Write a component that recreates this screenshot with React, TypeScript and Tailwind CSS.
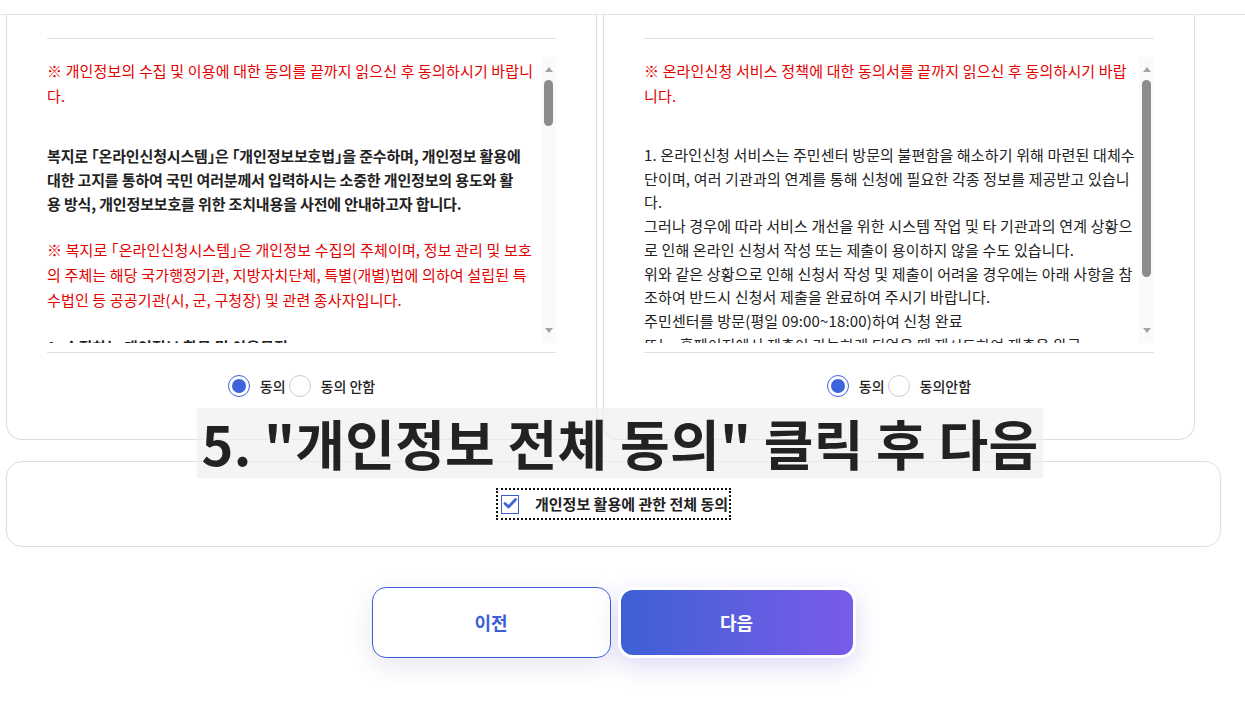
import React from "react";

const leftRed1 = [
  "※ 개인정보의 수집 및 이용에 대한 동의를 끝까지 읽으신 후 동의하시기 바랍니",
  "다.",
];
const leftBold = [
  "복지로 「온라인신청시스템」은 「개인정보보호법」을 준수하며, 개인정보 활용에",
  "대한 고지를 통하여 국민 여러분께서 입력하시는 소중한 개인정보의 용도와 활",
  "용 방식, 개인정보보호를 위한 조치내용을 사전에 안내하고자 합니다.",
];
const leftRed2 = [
  "※ 복지로 「온라인신청시스템」은 개인정보 수집의 주체이며, 정보 관리 및 보호",
  "의 주체는 해당 국가행정기관, 지방자치단체, 특별(개별)법에 의하여 설립된 특",
  "수법인 등 공공기관(시, 군, 구청장) 및 관련 종사자입니다.",
];
const rightRed = [
  "※ 온라인신청 서비스 정책에 대한 동의서를 끝까지 읽으신 후 동의하시기 바랍",
  "니다.",
];
const rightBody = [
  "1. 온라인신청 서비스는 주민센터 방문의 불편함을 해소하기 위해 마련된 대체수",
  "단이며, 여러 기관과의 연계를 통해 신청에 필요한 각종 정보를 제공받고 있습니",
  "다.",
  "그러나 경우에 따라 서비스 개선을 위한 시스템 작업 및 타 기관과의 연계 상황으",
  "로 인해 온라인 신청서 작성 또는 제출이 용이하지 않을 수도 있습니다.",
  "위와 같은 상황으로 인해 신청서 작성 및 제출이 어려울 경우에는 아래 사항을 참",
  "조하여 반드시 신청서 제출을 완료하여 주시기 바랍니다.",
  "주민센터를 방문(평일 09:00~18:00)하여 신청 완료",
  "또는, 홈페이지에서 제출이 가능하게 되었을 때 재시도하여 제출을 완료",
];

function Lines({ lines, className }: { lines: string[]; className: string }) {
  return (
    <div className={className}>
      {lines.map((l, i) => (
        <div key={i} className="whitespace-nowrap">
          {l}
        </div>
      ))}
    </div>
  );
}

function Scrollbar({ thumb }: { thumb: string }) {
  return (
    <div className="w-[15px] h-full bg-[#fafafa] flex flex-col items-center">
      <div className="h-[23px] flex items-center justify-center pt-[2px]">
        <div className="w-0 h-0 border-x-[4px] border-x-transparent border-b-[5px] border-b-[#a3a3a3]" />
      </div>
      <div className={`w-[9px] rounded-full bg-[#8c8c8c] ${thumb}`} />
      <div className="flex-1" />
      <div className="h-[22px] flex items-start justify-center pt-[7px]">
        <div className="w-0 h-0 border-x-[4px] border-x-transparent border-t-[5px] border-t-[#a3a3a3]" />
      </div>
    </div>
  );
}

function Radio({ checked }: { checked?: boolean }) {
  return checked ? (
    <span className="w-[22px] h-[22px] rounded-full border-[1.5px] border-[#3d63dd] flex items-center justify-center bg-white">
      <span className="w-[14px] h-[14px] rounded-full bg-[#3d63dd]" />
    </span>
  ) : (
    <span className="w-[22px] h-[22px] rounded-full border border-[#cfcfcf] bg-white" />
  );
}

function RadioRow({ no }: { no: string }) {
  return (
    <div className="flex items-center justify-center mt-[22px] h-[22px] text-[14px] font-medium text-[#222]">
      <Radio checked />
      <span className="ml-[10px] mr-[3px]">동의</span>
      <Radio />
      <span className="ml-[10px]">{no}</span>
    </div>
  );
}

export default function App() {
  return (
    <div className="relative min-h-[713px] bg-white font-['Noto_Sans_CJK_KR','Noto_Sans',sans-serif]">
      <div className="h-[15px] border-b border-[#e3e3e3]" />

      <div className="pl-[6px] pr-[24px]">
        <div className="flex gap-[6px]">
          {/* 개인정보 수집 동의 */}
          <div className="w-[591px] h-[425px] border-x border-b border-[#dedede] rounded-b-2xl px-[40px] pt-[23px]">
            <div className="border-t border-[#e0e0e0]" />
            <div className="mt-[18px] h-[286px] flex overflow-hidden">
              <div className="flex-1 overflow-hidden text-[15px] tracking-[0.01em] pt-[1px] [font-feature-settings:'halt']">
                <Lines lines={leftRed1} className="text-[#e50000] leading-[25px]" />
                <Lines lines={leftBold} className="mt-[36px] font-bold text-[#222] leading-[24px] tracking-[-0.01em]" />
                <Lines lines={leftRed2} className="mt-[21px] text-[#e50000] leading-[25px]" />
                <Lines lines={["1. 수집하는 개인정보 항목 및 이용목적"]} className="mt-[23px] font-bold text-[#222] leading-[24px]" />
              </div>
              <Scrollbar thumb="h-[46px]" />
            </div>
            <div className="mt-[9px] border-t border-[#e0e0e0]" />
            <RadioRow no="동의 안함" />
          </div>

          {/* 온라인신청 서비스 정책 동의 */}
          <div className="w-[592px] h-[425px] border-x border-b border-[#dedede] rounded-b-2xl px-[40px] pt-[23px]">
            <div className="border-t border-[#e0e0e0]" />
            <div className="mt-[18px] h-[286px] flex overflow-hidden">
              <div className="flex-1 overflow-hidden text-[15px] tracking-[0.01em] pt-[1px]">
                <Lines lines={rightRed} className="text-[#e50000] leading-[25px]" />
                <Lines lines={rightBody} className="mt-[35px] text-[#222] leading-[23.7px]" />
              </div>
              <Scrollbar thumb="h-[197px]" />
            </div>
            <div className="mt-[9px] border-t border-[#e0e0e0]" />
            <RadioRow no="동의안함" />
          </div>
        </div>

        {/* 전체 동의 */}
        <div className="mt-[21px] h-[86px] border border-[#dedede] rounded-2xl flex items-center justify-center">
          <label className="flex items-center gap-[16px] pl-[4px] pr-[2px] py-[4px] outline-dotted outline-2 outline-[#111] -outline-offset-1 text-[15px] font-bold text-[#222]">
            <span className="w-[18px] h-[19px] border-[1.5px] border-[#3b5bd0] flex items-center justify-center">
              <svg width="14" height="12" viewBox="0 0 14 12" fill="none">
                <path d="M2 5.5 L5.5 9 L12.5 1.5" stroke="#4563d8" strokeWidth="2.8" strokeLinecap="round" strokeLinejoin="round" />
              </svg>
            </span>
            <span>개인정보 활용에 관한 전체 동의</span>
          </label>
        </div>

        <div className="mt-[40px] flex justify-center gap-[7px]">
          <button className="w-[239px] h-[71px] rounded-[14px] border border-[#3d5fd6] bg-white text-[18px] font-bold text-[#3d5fd6] shadow-[0_8px_24px_rgba(60,60,120,0.12)]">
            이전
          </button>
          <button className="w-[238px] h-[71px] rounded-[15px] border-[3px] border-white bg-gradient-to-r from-[#3b60d5] to-[#785be9] text-[18px] font-bold text-white shadow-[0_8px_24px_rgba(90,80,220,0.22)]">
            다음
          </button>
        </div>
      </div>

      {/* 안내 문구 */}
      <div className="absolute left-[197px] top-[408px] w-[846px] h-[70px] bg-[rgba(238,238,238,0.65)] flex items-center justify-center">
        <span className="text-[54px] font-bold text-[#222] tracking-[0.005em] leading-none whitespace-nowrap">
          5. "개인정보 전체 동의" 클릭 후 다음
        </span>
      </div>
    </div>
  );
}
